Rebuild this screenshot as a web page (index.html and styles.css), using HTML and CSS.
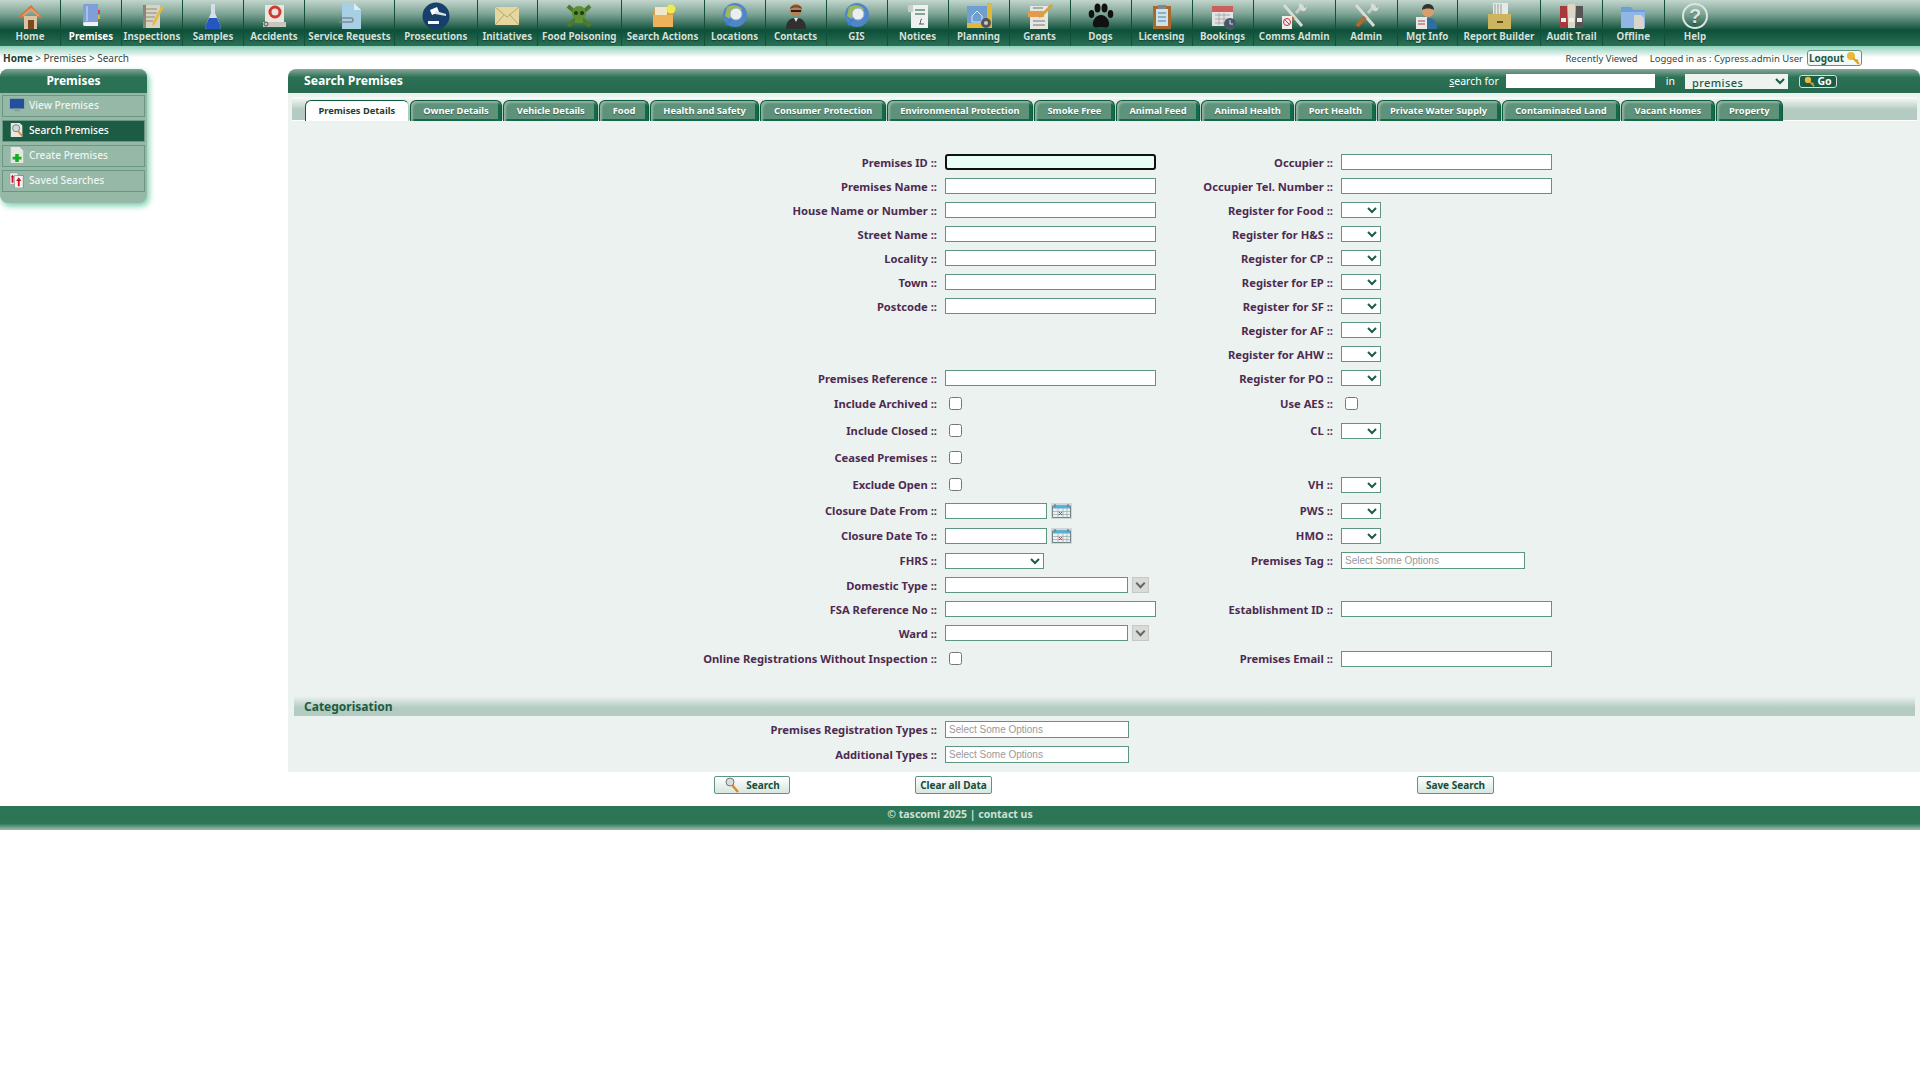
FILE: index.html
```html
<!DOCTYPE html>
<html lang="en">

<head>
    <meta charset="UTF-8" />
    <title>Search Premises</title>
    <link rel="stylesheet" href="styles.css">
</head>

<body>

    <svg class="sprites" width="0" height="0">
        <symbol id="i-home" viewBox="0 0 28 28"><path d="M8 14h13v13H8z" fill="#d9c3a0"/><path d="M12 18h6v9h-6z" fill="#7a4a1e"/><path d="M2 15 15 3l11 12-2 1-9-9-10 9z" fill="#d9793f"/><path d="M7 13l8-7 8 7v2l-8-7-8 7z" fill="#e9a06d"/></symbol>
        <symbol id="i-book" viewBox="0 0 28 28"><path d="M6 4c0-1 1-2 2-2h13v22H8c-1 0-2-1-2-2z" fill="#7f9fd8"/><path d="M6 22c0-1 1-2 2-2h13v4H8c-1 0-2-1-2-2z" fill="#eef2f8"/><path d="M21 8h2v4h-2z" fill="#d44"/><path d="M21 13h2v4h-2z" fill="#e8b13a"/><path d="M9 4h2v15H9z" fill="#a9c0e8"/></symbol>
        <symbol id="i-note" viewBox="0 0 28 28"><path d="M5 3h17v23H5z" fill="#d8d4c4"/><path d="M8 7h11M8 11h11M8 15h9M8 19h7" stroke="#8d8a78"/><path d="M5 3h3v23H5z" fill="#8a8672"/><path d="M24 3l2 1-9 18-3 2 1-4z" fill="#e8b93a"/></symbol>
        <symbol id="i-flask" viewBox="0 0 28 28"><path d="M12 2h4v9l6 14c0 1-1 2-2 2H8c-1 0-2-1-2-2l6-14z" fill="#d3e0ea"/><path d="M10 16h8l4 9c0 1-1 2-2 2H8c-1 0-2-1-2-2z" fill="#2456c4"/></symbol>
        <symbol id="i-accident" viewBox="0 0 28 28"><path d="M5 3h19v18H5z" fill="#e9e6df"/><circle cx="15" cy="10" r="5" fill="none" stroke="#d2382b" stroke-width="3"/><path d="M3 20h23v5H3z" fill="#c9c6bc"/><circle cx="6" cy="22" r="2" fill="none" stroke="#555"/></symbol>
        <symbol id="i-doc" viewBox="0 0 28 28"><path d="M6 1h12l7 7v19H6z" fill="#a7cfe6"/><path d="M18 1l7 7h-7z" fill="#dcedf6"/><path d="M3 20h12a2 2 0 0 0 0-4H6" fill="none" stroke="#7c8a90" stroke-width="1.5"/></symbol>
        <symbol id="i-gavel" viewBox="0 0 28 28"><circle cx="14" cy="14" r="13.5" fill="#173f6c"/><path d="M8 8l7-3 2 5-7 3z" fill="#fff"/><path d="M14 9l10 3v2l-11-2z" fill="#d9e2ea"/><path d="M6 19h11v3H6z" fill="#fff"/></symbol>
        <symbol id="i-mail" viewBox="0 0 28 28"><path d="M2 5h24v18H2z" fill="#e6d7a0"/><path d="M2 5l12 10L26 5M2 23l9-10M26 23l-9-10" fill="none" stroke="#b8a668"/></symbol>
        <symbol id="i-skull" viewBox="0 0 28 28"><path d="M3 4l22 20M25 4 3 24" stroke="#4f7a2c" stroke-width="4"/><circle cx="14" cy="11" r="7" fill="#5f8f35"/><path d="M10 16h8v5h-8z" fill="#5f8f35"/><circle cx="11" cy="11" r="2" fill="#1d3a12"/><circle cx="17" cy="11" r="2" fill="#1d3a12"/></symbol>
        <symbol id="i-folder" viewBox="0 0 28 28"><path d="M4 8h8l2 2h10v15H4z" fill="#e29a3e"/><path d="M6 5h12v8H6z" fill="#f2e7c8"/><path d="M4 13h20v12H4z" fill="#eeb25b"/><circle cx="22" cy="7" r="4.5" fill="#f0ea50"/></symbol>
        <symbol id="i-globe" viewBox="0 0 28 28"><circle cx="14" cy="13" r="12" fill="#4f86c9"/><path d="M6 5c5-3 12-2 15 2l-4 5-6-1-2 6-5-3z" fill="#9cb85a"/><circle cx="15" cy="12" r="6" fill="#e9eef0" stroke="#9fb0b8"/><path d="M10 17l-5 6" stroke="#3a7fd0" stroke-width="2"/></symbol>
        <symbol id="i-man" viewBox="0 0 28 28"><path d="M4 27c0-8 4-11 10-11s10 3 10 11z" fill="#2f3030"/><path d="M12 16l2 4 2-4z" fill="#e8e8e8"/><circle cx="14" cy="8" r="6" fill="#b97f55"/><path d="M8 7c0-5 12-5 12 0-3-2-9-2-12 0z" fill="#7a4a25"/><path d="M9 8h10v2H9z" fill="#222"/></symbol>
        <symbol id="i-notice" viewBox="0 0 28 28"><path d="M7 3h17v23H7z" fill="#eef1ee"/><path d="M4 3h5v7H4z" fill="#c9d0cc"/><path d="M11 8h10M11 12h10" stroke="#5f8d78" stroke-width="1.5"/><path d="M15 22h5M16 22c1-2 0-5 2-5" fill="none" stroke="#556" /></symbol>
        <symbol id="i-plan" viewBox="0 0 28 28"><path d="M2 4h20v22H2z" fill="#6f9fd0"/><path d="M7 14l5-5 5 5v6H7z" fill="none" stroke="#d5e5f4"/><path d="M22 1h5v25h-5zM2 21h20v5H2z" fill="#e0b93a"/><circle cx="21" cy="21" r="5" fill="#555"/><circle cx="21" cy="21" r="2" fill="#ccc"/></symbol>
        <symbol id="i-form" viewBox="0 0 28 28"><path d="M4 4h18v23H4z" fill="#e5e6e0"/><path d="M2 9h16v6H2z" fill="#e59a4a"/><path d="M7 19h12M7 23h12M7 6h10" stroke="#777"/><path d="M25 2l2 2-11 11-3 1 1-3z" fill="#d9a13c"/></symbol>
        <symbol id="i-paw" viewBox="0 0 28 28"><path d="M14 13c5 0 9 6 8 10s-5 2-8 2-7 2-8-2 3-10 8-10z" fill="#111"/><ellipse cx="4.5" cy="12" rx="2.8" ry="4" fill="#111"/><ellipse cx="10.5" cy="6" rx="3" ry="4.5" fill="#111"/><ellipse cx="17.5" cy="6" rx="3" ry="4.5" fill="#111"/><ellipse cx="23.5" cy="12" rx="2.8" ry="4" fill="#111"/></symbol>
        <symbol id="i-clip" viewBox="0 0 28 28"><path d="M5 4h18v23H5z" fill="#a9682c"/><path d="M8 7h12v17H8z" fill="#cfe2ea"/><path d="M10 3h8v4h-8z" fill="#7e8a8e"/><path d="M10 11h8M10 15h8M10 19h8" stroke="#4c7fa0"/></symbol>
        <symbol id="i-cal" viewBox="0 0 28 28"><path d="M3 4h21v20H3z" fill="#e3e3e3"/><path d="M3 4h21v6H3z" fill="#c9605a"/><path d="M6 13h15M6 17h15M6 21h9M10 11v12M15 11v12" stroke="#aaa"/><circle cx="21" cy="22" r="6" fill="#465868"/><path d="M21 18v4h3" stroke="#dde" fill="none"/></symbol>
        <symbol id="i-tools" viewBox="0 0 28 28"><path d="M4 3l18 21" stroke="#d8dcd8" stroke-width="3"/><path d="M23 3l-7 8" stroke="#c7ccc8" stroke-width="3"/><path d="M13 15l-8 9" stroke="#b9672c" stroke-width="4"/><path d="M20 1a5 5 0 0 0 5 8l2-4-3 1-1-3z" fill="#d8dcd8"/></symbol>
        <symbol id="i-comms" viewBox="0 0 28 28"><use href="#i-tools"/><path d="M2 14h10v13H2z" fill="#eee"/><circle cx="7" cy="20" r="3.5" fill="none" stroke="#c33"/><path d="M4.5 17.5l5 5" stroke="#c33"/></symbol>
        <symbol id="i-person" viewBox="0 0 28 28"><path d="M6 27c0-8 3-11 9-11s9 3 9 11z" fill="#2f6f9f"/><circle cx="15" cy="9" r="6" fill="#d8a068"/><path d="M9 8c0-8 12-8 12 0-3-2-9-2-12 0z" fill="#333"/><path d="M3 15h11v12H3z" fill="#e8e8e8"/><path d="M5 19h7M5 22h7" stroke="#a44"/></symbol>
        <symbol id="i-box" viewBox="0 0 28 28"><path d="M8 1h15v12H8z" fill="#e8e8e6"/><path d="M10 2v10M13 2v10M16 2v10" stroke="#999"/><path d="M3 12h23v15H3z" fill="#cdb45f"/><path d="M12 19h6v2h-6z" fill="#5a4c1c"/></symbol>
        <symbol id="i-binder" viewBox="0 0 28 28"><path d="M2 4h7v22H2z" fill="#a63a3a"/><path d="M10 2h7v24h-7z" fill="#ddd6c4"/><path d="M18 4h7v22h-7z" fill="#555"/><path d="M3 16h5v4H3zM11 16h5v4h-5zM19 16h5v4h-5z" fill="#eee"/></symbol>
        <symbol id="i-offline" viewBox="0 0 28 28"><path d="M2 5h10l2 3h12v18H2z" fill="#6f9fd8"/><path d="M2 10h24v16H2z" fill="#8fb6e4"/><path d="M15 13h7l3 3v11H15z" fill="#d8d6cc"/></symbol>
        <symbol id="i-screen" viewBox="0 0 18 18"><path d="M1 2h16v11H1z" fill="#244f9e"/><path d="M6 13h6v3H6z" fill="#8aa09a"/></symbol>
        <symbol id="i-search" viewBox="0 0 18 18"><path d="M2 1h10l3 3v13H2z" fill="#e6e6e2"/><circle cx="8" cy="7" r="4" fill="#cfd8dc" stroke="#777"/><path d="M10 10l5 6" stroke="#e0862a" stroke-width="2"/></symbol>
        <symbol id="i-create" viewBox="0 0 18 18"><path d="M2 0h10l4 4v14H2z" fill="#e6e6e2"/><path d="M7 8h4v3h3v3h-3v3H7v-3H4v-3h3z" fill="#13b020"/></symbol>
        <symbol id="i-saved" viewBox="0 0 18 18"><path d="M1 1h9v13H1z" fill="#eee" stroke="#888" stroke-width=".5"/><path d="M6 4h10v14H6z" fill="#f4f4f4" stroke="#446" stroke-width=".5"/><path d="M11 6l3 4h-2v6h-2v-6H8zM4 3l2 3H5v6H3V6H2z" fill="#d0101a"/></symbol>
        <symbol id="i-calendar" viewBox="0 0 21 16"><path d="M0 0h21v16H0z" fill="#cdd8d8"/><path d="M1.500 3h18v11.500h-18z" fill="#eef0f0" stroke="#6f8488"/><path d="M2 2.500h17v3H2z" fill="#4fb2dc"/><path d="M4 1v3M17 1v3" stroke="#5d7076"/><path d="M2 8.500h17M2 11.500h17M7 5.500v9M12 5.500v9M16 5.500v9" stroke="#9aa8aa" stroke-width=".7"/><path d="M8 9l3 3M11 9l-3 3" stroke="#c33"/></symbol>
        <symbol id="i-lens" viewBox="0 0 16 16"><circle cx="6" cy="5" r="4" fill="#d5dde0" stroke="#777"/><path d="M8 8l6 7" stroke="#e0862a" stroke-width="2.4"/></symbol>
        <symbol id="i-key" viewBox="0 0 14 14"><circle cx="5" cy="5" r="4" fill="#e8b93a"/><path d="M7 7l6 6M10 10l2-1" stroke="#d9a02a" stroke-width="2"/></symbol>
    </svg>

    <div class="navbar">
        <a href="#"><svg class="nav-icon"><use href="#i-home"/></svg>Home</a>
        <a href="#" class="active"><svg class="nav-icon"><use href="#i-book"/></svg>Premises</a>
        <a href="#"><svg class="nav-icon"><use href="#i-note"/></svg>Inspections</a>
        <a href="#"><svg class="nav-icon"><use href="#i-flask"/></svg>Samples</a>
        <a href="#"><svg class="nav-icon"><use href="#i-accident"/></svg>Accidents</a>
        <a href="#"><svg class="nav-icon"><use href="#i-doc"/></svg>Service Requests</a>
        <a href="#"><svg class="nav-icon"><use href="#i-gavel"/></svg>Prosecutions</a>
        <a href="#"><svg class="nav-icon"><use href="#i-mail"/></svg>Initiatives</a>
        <a href="#"><svg class="nav-icon"><use href="#i-skull"/></svg>Food Poisoning</a>
        <a href="#"><svg class="nav-icon"><use href="#i-folder"/></svg>Search Actions</a>
        <a href="#"><svg class="nav-icon"><use href="#i-globe"/></svg>Locations</a>
        <a href="#"><svg class="nav-icon"><use href="#i-man"/></svg>Contacts</a>
        <a href="#"><svg class="nav-icon"><use href="#i-globe"/></svg>GIS</a>
        <a href="#"><svg class="nav-icon"><use href="#i-notice"/></svg>Notices</a>
        <a href="#"><svg class="nav-icon"><use href="#i-plan"/></svg>Planning</a>
        <a href="#"><svg class="nav-icon"><use href="#i-form"/></svg>Grants</a>
        <a href="#"><svg class="nav-icon"><use href="#i-paw"/></svg>Dogs</a>
        <a href="#"><svg class="nav-icon"><use href="#i-clip"/></svg>Licensing</a>
        <a href="#"><svg class="nav-icon"><use href="#i-cal"/></svg>Bookings</a>
        <a href="#"><svg class="nav-icon"><use href="#i-comms"/></svg>Comms Admin</a>
        <a href="#"><svg class="nav-icon"><use href="#i-tools"/></svg>Admin</a>
        <a href="#"><svg class="nav-icon"><use href="#i-person"/></svg>Mgt Info</a>
        <a href="#"><svg class="nav-icon"><use href="#i-box"/></svg>Report Builder</a>
        <a href="#"><svg class="nav-icon"><use href="#i-binder"/></svg>Audit Trail</a>
        <a href="#"><svg class="nav-icon"><use href="#i-offline"/></svg>Offline</a>
        <a href="#" class="last"><svg class="nav-icon" viewBox="0 0 28 28"><circle cx="14" cy="14" r="12" fill="none" stroke="#dbe6e0" stroke-width="2"/><text x="14" y="21" text-anchor="middle" class="help-mark">?</text></svg>Help</a>
    </div>

    <div class="subbar">
        <div class="breadcrumb"><strong>Home</strong> &gt; Premises &gt; Search</div>
        <div class="userinfo">
            <span class="recent">Recently Viewed</span>
            <span>Logged in as : Cypress.admin User</span>
            <a href="#" class="logout">Logout <svg class="small-icon"><use href="#i-key"/></svg></a>
        </div>
    </div>

    <div class="page">
        <div class="sidebar">
            <h2>Premises</h2>
            <a href="#"><svg class="side-icon"><use href="#i-screen"/></svg>View Premises</a>
            <a href="#" class="active"><svg class="side-icon"><use href="#i-search"/></svg>Search Premises</a>
            <a href="#"><svg class="side-icon"><use href="#i-create"/></svg>Create Premises</a>
            <a href="#"><svg class="side-icon"><use href="#i-saved"/></svg>Saved Searches</a>
        </div>

        <div class="main">
            <div class="titlebar">
                <h1>Search Premises</h1>
                <div class="quicksearch">
                    <label><u>s</u>earch for</label>
                    <input type="text" class="qs-input" />
                    <span class="qs-in">in</span>
                    <select class="qs-select"><option>premises</option></select>
                    <button class="go"><svg class="small-icon"><use href="#i-key"/></svg>Go</button>
                </div>
            </div>

            <div class="content">
                <div class="tabs">
                    <a href="#" class="active">Premises Details</a>
                    <a href="#">Owner Details</a>
                    <a href="#">Vehicle Details</a>
                    <a href="#">Food</a>
                    <a href="#">Health and Safety</a>
                    <a href="#">Consumer Protection</a>
                    <a href="#">Environmental Protection</a>
                    <a href="#">Smoke Free</a>
                    <a href="#">Animal Feed</a>
                    <a href="#">Animal Health</a>
                    <a href="#">Port Health</a>
                    <a href="#">Private Water Supply</a>
                    <a href="#">Contaminated Land</a>
                    <a href="#">Vacant Homes</a>
                    <a href="#">Property</a>
                </div>

                <div class="form-grid">
                    <label>Premises ID ::</label><div class="ctl"><input type="text" class="wide focused" /></div>
                    <label>Occupier ::</label><div class="ctl"><input type="text" class="wide" /></div>

                    <label>Premises Name ::</label><div class="ctl"><input type="text" class="wide" /></div>
                    <label>Occupier Tel. Number ::</label><div class="ctl"><input type="text" class="wide" /></div>

                    <label>House Name or Number ::</label><div class="ctl"><input type="text" class="wide" /></div>
                    <label>Register for Food ::</label><div class="ctl"><select class="tiny"></select></div>

                    <label>Street Name ::</label><div class="ctl"><input type="text" class="wide" /></div>
                    <label>Register for H&amp;S ::</label><div class="ctl"><select class="tiny"></select></div>

                    <label>Locality ::</label><div class="ctl"><input type="text" class="wide" /></div>
                    <label>Register for CP ::</label><div class="ctl"><select class="tiny"></select></div>

                    <label>Town ::</label><div class="ctl"><input type="text" class="wide" /></div>
                    <label>Register for EP ::</label><div class="ctl"><select class="tiny"></select></div>

                    <label>Postcode ::</label><div class="ctl"><input type="text" class="wide" /></div>
                    <label>Register for SF ::</label><div class="ctl"><select class="tiny"></select></div>

                    <div></div><div></div>
                    <label>Register for AF ::</label><div class="ctl"><select class="tiny"></select></div>

                    <div></div><div></div>
                    <label>Register for AHW ::</label><div class="ctl"><select class="tiny"></select></div>

                    <label>Premises Reference ::</label><div class="ctl"><input type="text" class="wide" /></div>
                    <label>Register for PO ::</label><div class="ctl"><select class="tiny"></select></div>

                    <label>Include Archived ::</label><div class="ctl"><input type="checkbox" /></div>
                    <label>Use AES ::</label><div class="ctl"><input type="checkbox" /></div>

                    <label>Include Closed ::</label><div class="ctl"><input type="checkbox" /></div>
                    <label>CL ::</label><div class="ctl"><select class="tiny"></select></div>

                    <label>Ceased Premises ::</label><div class="ctl"><input type="checkbox" /></div>
                    <div></div><div></div>

                    <label>Exclude Open ::</label><div class="ctl"><input type="checkbox" /></div>
                    <label>VH ::</label><div class="ctl"><select class="tiny"></select></div>

                    <label>Closure Date From ::</label><div class="ctl"><input type="text" class="date" /><svg class="cal-icon"><use href="#i-calendar"/></svg></div>
                    <label>PWS ::</label><div class="ctl"><select class="tiny"></select></div>

                    <label>Closure Date To ::</label><div class="ctl"><input type="text" class="date" /><svg class="cal-icon"><use href="#i-calendar"/></svg></div>
                    <label>HMO ::</label><div class="ctl"><select class="tiny"></select></div>

                    <label>FHRS ::</label><div class="ctl"><select class="mid"></select></div>
                    <label>Premises Tag ::</label><div class="ctl"><input type="text" class="chosen" placeholder="Select Some Options" /></div>

                    <label>Domestic Type ::</label><div class="ctl"><input type="text" class="combo" /><span class="combo-btn"></span></div>
                    <div></div><div></div>

                    <label>FSA Reference No ::</label><div class="ctl"><input type="text" class="wide" /></div>
                    <label>Establishment ID ::</label><div class="ctl"><input type="text" class="wide" /></div>

                    <label>Ward ::</label><div class="ctl"><input type="text" class="combo" /><span class="combo-btn"></span></div>
                    <div></div><div></div>

                    <label>Online Registrations Without Inspection ::</label><div class="ctl"><input type="checkbox" /></div>
                    <label>Premises Email ::</label><div class="ctl"><input type="text" class="wide" /></div>
                </div>

                <h3 class="section">Categorisation</h3>

                <div class="cat-grid">
                    <label>Premises Registration Types ::</label><div class="ctl"><input type="text" class="chosen" placeholder="Select Some Options" /></div>
                    <label>Additional Types ::</label><div class="ctl"><input type="text" class="chosen" placeholder="Select Some Options" /></div>
                </div>
            </div>

            <div class="actions">
                <button class="btn btn-search"><svg class="btn-icon"><use href="#i-lens"/></svg>Search</button>
                <button class="btn btn-clear">Clear all Data</button>
                <button class="btn btn-save">Save Search</button>
            </div>
        </div>
    </div>

    <div class="footer">© tascomi 2025 | contact us</div>

</body>

</html>
```

FILE: styles.css
```css
body {
    font-family: "Noto Sans", sans-serif;
    font-size: 10px;
    background-color: #ffffff;
    color: #333;
    margin: 0;
    padding: 0;
}

a {
    text-decoration: none;
}

.sprites {
    display: block;
    height: 0;
}

.help-mark {
    font-family: "Liberation Sans", sans-serif;
    font-size: 20px;
    fill: #dbe6e0;
}

/* Navbar */
.navbar {
    display: grid;
    grid-template-columns: repeat(5, 61px) 90px 82.5px 60.5px 83.5px 83px repeat(9, 61px) 82.5px 61.5px 60.5px 83px 62px 61.5px 61px;
    height: 46px;
    background: linear-gradient(#c2d5cc 0, #7ea596 30%, #0d5039 66%, #2b7057 100%);
}

.navbar a {
    box-sizing: border-box;
    display: flex;
    flex-direction: column;
    align-items: center;
    border-right: 1px solid #12503a;
    color: #d3e2db;
    font-weight: 700;
    font-size: 9.8px;
    line-height: 13px;
    white-space: nowrap;
    text-shadow: 0 1px 1px rgba(0, 0, 0, 0.4);
}

.navbar a.active {
    color: #ffffff;
}

.navbar a.last {
    border-right: none;
}

.nav-icon {
    width: 28px;
    height: 28px;
    margin-top: 2px;
    flex-shrink: 0;
}

/* Breadcrumb row */
.subbar {
    display: flex;
    justify-content: space-between;
    height: 23px;
    background: linear-gradient(#8fd0ba 0, #ffffff 50%);
    padding-left: 3px;
    color: #33473f;
}

.breadcrumb {
    padding-top: 5px;
    font-size: 10px;
}

.breadcrumb strong {
    color: #1c3f31;
}

.userinfo {
    display: flex;
    align-items: flex-start;
    gap: 12px;
    padding: 4px 58px 0 0;
    font-size: 9.5px;
    line-height: 15px;
}

.userinfo span {
    padding-top: 1px;
}

.logout {
    box-sizing: border-box;
    display: flex;
    align-items: center;
    justify-content: center;
    width: 55px;
    height: 16px;
    margin-left: -8px;
    border: 1px solid #5f9580;
    border-radius: 3px;
    color: #1c5c44;
    font-size: 10px;
    font-weight: 700;
    background-color: #f4f8f6;
    gap: 2px;
}

.small-icon {
    width: 14px;
    height: 14px;
}

/* Layout */
.page {
    display: flex;
    align-items: flex-start;
}

.sidebar {
    box-sizing: border-box;
    width: 147px;
    height: 134px;
    flex-shrink: 0;
    margin-right: 141px;
    padding: 0 2px;
    background-color: #96b8a7;
    border-radius: 8px;
    box-shadow: 2px 3px 6px #76cfae;
}

.sidebar h2 {
    margin: 0 -2px 2px;
    height: 24px;
    line-height: 23px;
    border-radius: 8px 8px 0 0;
    background: linear-gradient(#7ea596 0, #2b7155 35%, #2b7155 100%);
    color: white;
    font-size: 12px;
    text-align: center;
}

.sidebar a {
    box-sizing: border-box;
    display: flex;
    align-items: center;
    gap: 4px;
    height: 22px;
    margin-bottom: 3px;
    padding: 0 0 2px 6px;
    border: 1px solid #6a9683;
    color: #eef5f1;
    font-size: 10.2px;
    font-weight: 500;
}

.sidebar a.active {
    background-color: #1c5c44;
    color: white;
}

.side-icon {
    width: 16px;
    height: 16px;
}

.main {
    flex: 1;
}

.titlebar {
    display: flex;
    justify-content: space-between;
    height: 24px;
    border-radius: 8px 8px 0 0;
    background: linear-gradient(#8aa99b 0, #2b7155 35%, #266a50 100%);
    color: white;
}

.titlebar h1 {
    margin: 0;
    padding-left: 16px;
    font-size: 12.2px;
    line-height: 23px;
}

.quicksearch {
    display: flex;
    align-items: center;
    font-size: 10.5px;
}

.qs-input {
    box-sizing: border-box;
    width: 149px;
    height: 14px;
    margin-left: 7px;
    border: none;
}

.qs-in {
    margin: 0 10px 0 11px;
}

.qs-select {
    box-sizing: border-box;
    width: 103px;
    height: 15px;
    padding: 0 3px;
    border: none;
    border-radius: 0;
    background-color: #eef3f0;
    color: #1c5c44;
    font-family: inherit;
    font-size: 11px;
    letter-spacing: 0.4px;
    font-weight: 500;
}

.go {
    box-sizing: border-box;
    display: flex;
    align-items: center;
    justify-content: center;
    width: 38px;
    height: 13px;
    margin: 0 83px 0 11px;
    padding: 0;
    border: 1px solid #cfe0d8;
    border-radius: 3px;
    background-color: #1c5c44;
    color: white;
    font-family: inherit;
    font-size: 10.5px;
    font-weight: 700;
}

.go .small-icon {
    width: 11px;
    height: 11px;
    margin-right: 2px;
}

/* Main panel */
.content {
    height: 679px;
    background-color: #ecf2f0;
    padding-top: 4px;
    box-sizing: border-box;
    overflow: hidden;
}

.tabs {
    display: flex;
    gap: 1px;
    height: 24px;
    box-sizing: border-box;
    margin: 0 3px 0 4px;
    padding: 3px 0 0 13px;
    background: linear-gradient(#fbfcfb 0, #b3cbc0 55%, #b3cbc0 100%);
    border-bottom: 1px solid #ffffff;
}

.tabs a {
    height: 20px;
    line-height: 20px;
    padding: 0 12.5px;
    border: 1px solid #0b5c3c;
    border-bottom: none;
    border-radius: 6px 6px 0 0;
    background-color: #5f927b;
    box-shadow: inset 2px 2px 2px #8fb3a1, inset -3px -2px 0 #14694a;
    color: white;
    font-size: 9.3px;
    font-weight: 700;
    white-space: nowrap;
    text-shadow: 0 1px 1px rgba(0, 0, 0, 0.4);
}

.tabs a.active {
    background-color: #ffffff;
    box-shadow: none;
    border-right-color: #b3cbc0;
    color: #1c3f31;
    text-shadow: none;
}

/* Form */
.form-grid {
    display: grid;
    grid-template-columns: 649px 247px 149px 1fr;
    grid-template-rows: repeat(10, 24px) repeat(4, 27px) repeat(3, 25px) repeat(3, 24px) 27px;
    margin-top: 29px;
}

.cat-grid {
    display: grid;
    grid-template-columns: 649px 1fr;
    grid-auto-rows: 25px;
    margin-top: 1px;
}

.form-grid label,
.cat-grid label {
    align-self: center;
    color: #4d2b50;
    font-size: 11.2px;
    font-weight: 700;
    text-align: right;
    white-space: nowrap;
}

.ctl {
    display: flex;
    align-items: center;
    padding-left: 8px;
}

input[type="text"],
select {
    box-sizing: border-box;
    height: 16px;
    padding: 0 3px;
    border: 1px solid #5c9680;
    border-radius: 0;
    background-color: #ffffff;
    color: #1c5c44;
    font-size: 10px;
}

.qs-input[type="text"] {
    border: none;
    height: 14px;
}

select.qs-select {
    border: none;
    font-size: 11px;
    height: 15px;
    background-color: #eef3f0;
}

input[type="checkbox"] {
    margin: 0 0 0 4px;
    width: 13px;
    height: 13px;
}

.wide {
    width: 211px;
}

.focused[type="text"] {
    border: 2px solid #111;
    border-radius: 3px;
    background-color: #e8fff6;
}

.tiny {
    width: 40px;
}

.mid {
    width: 99px;
}

.date {
    width: 102px;
}

.cal-icon {
    width: 21px;
    height: 16px;
    margin-left: 4px;
}

.combo {
    width: 183px;
}

.combo-btn {
    box-sizing: border-box;
    width: 17px;
    height: 16px;
    margin-left: 4px;
    display: flex;
    align-items: center;
    justify-content: center;
    border: 1px solid #c4c8c6;
    background-color: #d9dbd9;
}

.combo-btn::after {
    content: "";
    width: 5px;
    height: 5px;
    margin-top: -3px;
    border-right: 2px solid #666;
    border-bottom: 2px solid #666;
    transform: rotate(45deg);
}

input.chosen {
    width: 184px;
    height: 17px;
    font-family: "Liberation Sans", sans-serif;
    font-size: 10px;
}

input.chosen::placeholder {
    color: #999;
    opacity: 1;
}

.section {
    height: 20px;
    margin: 24px 5px 0 6px;
    padding-left: 10px;
    background: linear-gradient(#ecf2f0 0, #b3cbc0 60%, #b3cbc0 100%);
    color: #1c5c44;
    font-size: 12px;
    line-height: 22px;
}

/* Buttons */
.actions {
    display: flex;
    height: 34px;
    padding: 4px 0 0 426px;
    box-sizing: border-box;
}

.btn {
    box-sizing: border-box;
    display: flex;
    align-items: center;
    justify-content: center;
    height: 18px;
    padding: 0;
    border: 1px solid #5c9680;
    border-radius: 2px;
    background: linear-gradient(#ffffff, #d8e6df);
    color: #174d38;
    font-family: inherit;
    font-size: 10px;
    font-weight: 700;
}

.btn-search {
    width: 76px;
}

.btn-clear {
    width: 77px;
    margin-left: 125px;
}

.btn-save {
    width: 77px;
    margin-left: 425px;
}

.btn-icon {
    width: 16px;
    height: 16px;
    margin-right: 6px;
}

.footer {
    height: 24px;
    box-sizing: border-box;
    padding-top: 1px;
    background: linear-gradient(#2c7556 0, #2c7556 72%, #9dbcae 100%);
    color: #cfe0d8;
    font-size: 10.5px;
    font-weight: 700;
    text-align: center;
}
```
